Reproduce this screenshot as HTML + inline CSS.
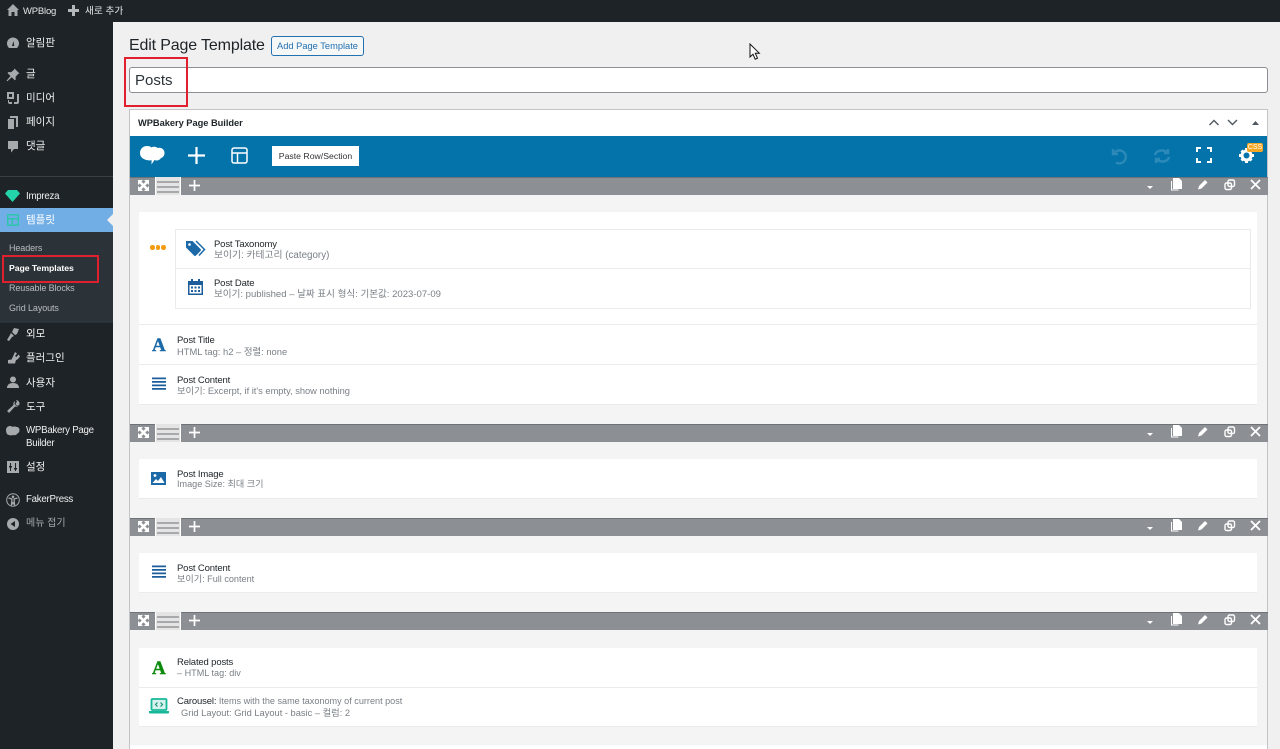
<!DOCTYPE html>
<html><head><meta charset="utf-8">
<style>
*{box-sizing:border-box}
html,body{margin:0;padding:0;width:1280px;height:749px;overflow:hidden;background:#f0f0f1}
body{position:relative;font-family:"Liberation Sans","Noto Sans CJK KR",sans-serif;font-size:10px;color:#3c434a}
.a{position:absolute}
.t{position:absolute;white-space:nowrap;line-height:14px}
.m{color:#f0f0f1;font-size:10.5px;left:26px}
.l{font-size:9.7px;letter-spacing:-.25px}
.s{color:#b9bcc0;font-size:9px;left:9px;letter-spacing:-.1px}
.ic{position:absolute;fill:#a7aaad}
.bar{position:absolute;left:130px;width:1138px;height:18px;background:#8c8f94;border-top:1px solid #6f7276}
.bar .mv{position:absolute;left:25px;top:-1px;width:26px;height:18px;background:#e4e4e4;border-left:1px solid #fff;border-right:1px solid #fff}
.bar .mv i{position:absolute;left:1px;width:22px;height:2px;background:#a8a9ab;box-shadow:0 5px 0 #a8a9ab,0 10px 0 #a8a9ab;top:4px}
.bar svg{position:absolute;fill:none;stroke:#fff}
.white{position:absolute;background:#fff;border-bottom:1px solid #ebebeb}
.h{position:absolute;color:#1d2327;font-size:9.5px;line-height:11px;white-space:nowrap;letter-spacing:-.15px}
.d{position:absolute;color:#7a7f85;font-size:9.3px;line-height:11px;white-space:nowrap}
.A{position:absolute;font-family:'Liberation Serif',serif;font-weight:bold;font-size:19px;line-height:17px;-webkit-text-stroke:.4px currentColor}
</style></head><body>

<svg width="0" height="0" style="position:absolute"><defs>
<symbol id="exp" viewBox="0 0 11 11"><path d="M1 1l9 9M10 1l-9 9" fill="none" stroke="#fff" stroke-width="2.600"/><path d="M0 0h5L0 5zM11 0H6l5 5zM0 11h5L0 6zM11 11H6l5-5z" fill="#fff" stroke="none"/></symbol>
<symbol id="pl" viewBox="0 0 11 11"><path d="M5.500 0v11M0 5.500h11" fill="none" stroke="#fff" stroke-width="1.700"/></symbol>
<symbol id="car" viewBox="0 0 8 5"><path d="M1 1h6L4 4z" fill="#fff" stroke="none"/></symbol>
<symbol id="act" viewBox="0 0 112 13"><path d="M3 0h6l3 3v8H3z" fill="#fff" stroke="none"/><path d="M1.500 3v9h7" fill="none" stroke="#fff" stroke-width="1"/><path d="M28 11.500l1-3.500 6-6 2.500 2.500-6 6z" fill="#fff" stroke="none"/><rect x="55" y="5" width="6.500" height="6.500" rx="1.500" fill="none" stroke="#fff" stroke-width="1.400"/><rect x="58" y="2" width="6.500" height="6.500" rx="1.500" fill="none" stroke="#fff" stroke-width="1.400"/><path d="M81 2l9 9M90 2l-9 9" fill="none" stroke="#fff" stroke-width="1.800"/></symbol>
</defs></svg>

<!-- admin bar -->
<div class="a" style="left:0;top:0;width:1280px;height:22px;background:#1d2327"></div>
<svg class="ic" style="left:6px;top:3px" width="14" height="14" viewBox="0 0 14 14"><path d="M7 1 L1 7 L2.500 7 L2.500 13 L5.500 13 L5.500 9 L8.500 9 L8.500 13 L11.500 13 L11.500 7 L13 7 Z"/></svg>
<div class="t" style="left:23px;top:5px;font-size:9.500px;letter-spacing:-.2px;color:#e6e7e8">WPBlog</div>
<svg class="a" style="left:68px;top:5px" width="11" height="11" viewBox="0 0 11 11"><path d="M4 0h3v4h4v3H7v4H4V7H0V4h4z" fill="#b5b8bb"/></svg>
<div class="t" style="left:85px;top:5px;font-size:9.700px;color:#e6e7e8">새로 추가</div>

<!-- sidebar -->
<div class="a" style="left:0;top:22px;width:113px;height:727px;background:#1d2327"></div>
<div class="a" style="left:0;top:176px;width:113px;height:1px;background:#3a3f44"></div>
<svg class="ic" style="left:6px;top:36px" width="14" height="14" viewBox="0 0 14 14"><path d="M7 1.500a6 6 0 0 0-6 6c0 1.800.8 3.300 2 4.500h8c1.200-1.200 2-2.700 2-4.500a6 6 0 0 0-6-6zM6 10l1.500-5 .8 5z"/></svg>
<div class="t m" style="top:36px">알림판</div>
<svg class="ic" style="left:6px;top:68px" width="14" height="14" viewBox="0 0 14 14"><path d="M8.500 0.500l5 5-1.500.5-2.500 3 .3 2.500-1 .8-3-3-4.500 4-.8-.5 4-4.800-3-3 1-1 2.500.3 3-2.500z"/></svg>
<div class="t m" style="top:67px">글</div>
<svg class="ic" style="left:6px;top:91px" width="14" height="14" viewBox="0 0 14 14"><path d="M1 1h7v7H1zM3 3v3h3V3zM10 3h3v8c0 1.500-1 2-2 2H8v-2h3V3zM2 9h1v2h3v2H4c-1 0-2-.5-2-2z" fill-rule="evenodd"/></svg>
<div class="t m" style="top:91px">미디어</div>
<svg class="ic" style="left:7px;top:116px" width="12" height="13" viewBox="0 0 12 13"><path d="M3 0h8v11H9V2H3zM1 3h6v10H1z"/></svg>
<div class="t m" style="top:115px">페이지</div>
<svg class="ic" style="left:7px;top:140px" width="12" height="13" viewBox="0 0 12 13"><path d="M1 1h10v8H7l-3 3.500V9H1z"/></svg>
<div class="t m" style="top:139px">댓글</div>
<svg class="a" style="left:5px;top:190px" width="15" height="12" viewBox="0 0 15 12"><path d="M3 0h9l3 3.500L7.500 12 0 3.500z" fill="#23d3a9"/></svg>
<div class="t m l" style="top:190px">Impreza</div>
<div class="a" style="left:0;top:208px;width:113px;height:24px;background:#72aee6"></div>
<svg class="a" style="left:7px;top:214px" width="12" height="12" viewBox="0 0 12 12"><path d="M0 0h12v12H0zM1.500 1.500v2.500h9V1.500zM1.500 5.500v5h3v-5zM6 5.500v5h4.500v-5z" fill="#2fc4ae" fill-rule="evenodd"/></svg>
<div class="t m" style="top:213px;color:#fff">템플릿</div>
<div class="a" style="left:107px;top:214px;width:0;height:0;border:6px solid transparent;border-right-color:#f0f0f1;border-left:0"></div>
<div class="a" style="left:0;top:232px;width:113px;height:91px;background:#2c3338"></div>
<div class="t s" style="top:241px">Headers</div>
<div class="t s" style="top:261px;color:#fff;font-weight:bold;font-size:8.700px;letter-spacing:-.05px">Page Templates</div>
<div class="t s" style="top:281px">Reusable Blocks</div>
<div class="t s" style="top:301px">Grid Layouts</div>
<svg class="ic" style="left:6px;top:327px" width="14" height="14" viewBox="0 0 14 14"><path d="M8 1l5 1-2 5-2 1-3-3zM5 6l3 3-2 1-3 4-2-1 3-5z"/></svg>
<div class="t m" style="top:327px">외모</div>
<svg class="ic" style="left:7px;top:351px" width="13" height="14" viewBox="0 0 13 14"><path d="M8 1l2 1.500-2 2.500 1.500 1 2-2.500 1.500 2-2.500 3-1.500.5-1 3.500H1V9l3.500-.5 1-2z"/></svg>
<div class="t m" style="top:351px">플러그인</div>
<svg class="ic" style="left:7px;top:376px" width="12" height="13" viewBox="0 0 12 13"><circle cx="6" cy="3.500" r="3"/><path d="M0 12c0-3 2-5 6-5s6 2 6 5z"/></svg>
<div class="t m" style="top:376px">사용자</div>
<svg class="ic" style="left:7px;top:400px" width="13" height="13" viewBox="0 0 13 13"><path d="M9 0c2 0 4 2 3.500 4.500L10 5.500 8.500 4 10 1.500 9 0zM8 1c-1.500 1-2 2.500-1.500 4L0.500 10.500c-.5 1 1 2.500 2 2l5.500-6c1.500.5 3 0 4-1.500L9.500 6 7.500 4z"/></svg>
<div class="t m" style="top:400px">도구</div>
<svg class="ic" style="left:5px;top:425px" width="15" height="13" viewBox="0 0 15 13"><path d="M1 5c0-2.500 2-4 4-4 1 0 2 .3 2.500 1 .8-.5 3-.8 4 0 1.500-.3 3 1 3 3 0 2-1 3-2 3.500-1 1.500-3 2-4.500 1.500-1 .5-3 .5-4 0C2 10 1 7.500 1 5z"/></svg>
<div class="t m l" style="top:424px">WPBakery Page</div>
<div class="t m l" style="top:437px">Builder</div>
<svg class="ic" style="left:7px;top:461px" width="12" height="12" viewBox="0 0 12 12"><path d="M0 0h12v12H0zM3 2v3H2v1.500h1V10h1V6.500h1V5H4V2zM8 2v5H7v1.500h1V10h1V8.500h1V7H9V2z" fill-rule="evenodd"/></svg>
<div class="t m" style="top:460px">설정</div>
<svg class="a" style="left:6px;top:493px" width="14" height="14" viewBox="0 0 14 14"><circle cx="7" cy="7" r="6.300" fill="none" stroke="#a7aaad"/><circle cx="7" cy="3.800" r="1.300" fill="#a7aaad"/><path d="M2.500 5L6 6l-.7 6.500 1.700-3 1.700 3L8 6l3.500-1" fill="none" stroke="#a7aaad" stroke-width="1.200"/></svg>
<div class="t m l" style="top:493px">FakerPress</div>
<svg class="a" style="left:7px;top:518px" width="12" height="12" viewBox="0 0 12 12"><circle cx="6" cy="6" r="6" fill="#a7aaad"/><path d="M8 3v6L3.500 6z" fill="#1d2327"/></svg>
<div class="t m" style="top:517px;color:#a7aaad;font-size:10px">메뉴 접기</div>

<!-- heading -->
<div class="t" style="left:129px;top:36px;font-size:16px;line-height:20px;letter-spacing:-.15px;color:#1d2327">Edit Page Template</div>
<div class="a" style="left:271px;top:36px;width:93px;height:20px;background:#f6f7f7;border:1px solid #2271b1;border-radius:3px;color:#2271b1;font-size:9.300px;line-height:19px;text-align:center;white-space:nowrap">Add Page Template</div>
<div class="a" style="left:129px;top:67px;width:1139px;height:26px;background:#fff;border:1px solid #8c8f94;border-radius:3px"></div>
<div class="t" style="left:135px;top:72px;font-size:15px;line-height:17px;color:#2c3338">Posts</div>

<!-- cursor -->
<svg class="a" style="left:749px;top:43px" width="12" height="19" viewBox="0 0 12 19"><path d="M1 1v13l3-2.800 2.200 5 2.300-1-2.200-5h4z" fill="#fff" stroke="#111" stroke-width="1"/></svg>

<!-- builder panel -->
<div class="a" style="left:129px;top:109px;width:1139px;height:640px;background:#fff;border:1px solid #c3c4c7"></div>
<div class="t" style="left:138px;top:116px;font-size:9.300px;font-weight:bold;color:#1d2327;letter-spacing:-.03px">WPBakery Page Builder</div>
<svg class="a" style="left:1208px;top:118px" width="54" height="9" viewBox="0 0 54 9" fill="none" stroke="#50575e" stroke-width="1.400"><path d="M1.500 7L6 2.500 10.500 7M20 2L24.500 6.500 29 2"/><path d="M44 7l3.500-4 3.500 4z" fill="#50575e" stroke="none"/></svg>
<div class="a" style="left:130px;top:136px;width:1137px;height:41px;background:#0473aa"></div>
<svg class="a" style="left:139px;top:145px" width="27" height="22" viewBox="0 0 27 22"><path d="M1 8c0-4 3-7 7-7 2 0 3.500.5 4.500 1.500C14 1.500 17 1.500 18.500 3c3-1 7 .8 7 5 0 2.500-1.500 4.500-3.500 5-1.500 2.500-4.500 3-6.500 2-1 1.500-2 3-3 4.500 0-1.500 0-3 .2-4.300C8 16 1 14 1 8z" fill="#fff"/></svg>
<svg class="a" style="left:188px;top:147px" width="17" height="17" viewBox="0 0 17 17"><path d="M7.400 0h2.200v7.400H17v2.200H9.600V17H7.400V9.600H0V7.400h7.400z" fill="#fff"/></svg>
<svg class="a" style="left:231px;top:147px" width="17" height="17" viewBox="0 0 17 17" fill="none" stroke="#fff" stroke-width="1.500"><rect x="1" y="1" width="15" height="15" rx="2"/><path d="M1 6h15M6.500 6v10"/></svg>
<div class="a" style="left:272px;top:146px;width:87px;height:20px;background:#fff;color:#333;font-size:8.700px;line-height:20px;text-align:center;white-space:nowrap">Paste Row/Section</div>
<svg class="a" style="left:1110px;top:147px" width="18" height="18" viewBox="0 0 18 18" fill="none" stroke="#2c8ab8" stroke-width="2.400"><path d="M3 2v5h5M3.500 7A6.500 6.500 0 1 1 6 15.500"/></svg>
<svg class="a" style="left:1153px;top:148px" width="18" height="16" viewBox="0 0 18 16" fill="none" stroke="#2c8ab8" stroke-width="2.400"><path d="M2 7c1-5 9-6 13-2M15 1v4h-4M16 9c-1 5-9 6-13 2M3 15v-4h4"/></svg>
<svg class="a" style="left:1196px;top:147px" width="16" height="16" viewBox="0 0 16 16" fill="none" stroke="#fff" stroke-width="2"><path d="M1 5V1h4M11 1h4v4M15 11v4h-4M5 15H1v-4"/></svg>
<svg class="a" style="left:1239px;top:148px" width="15" height="15" viewBox="0 0 15 15"><circle cx="7.500" cy="7.500" r="4.500" fill="none" stroke="#fff" stroke-width="3"/><path d="M6 0h3v3H6zM6 12h3v3H6zM0 6h3v3H0zM12 6h3v3h-3zM1.500 3.500l2-2 2 2-2 2zM9.500 3.500l2-2 2 2-2 2zM1.500 11.500l2-2 2 2-2 2zM9.500 11.500l2-2 2 2-2 2z" fill="#fff"/></svg>
<div class="a" style="left:1247px;top:143px;width:16px;height:9px;background:#f5a623;border-radius:2px;color:#fff;font-size:7px;line-height:9px;text-align:center">CSS</div>

<!-- row bodies -->
<div class="a" style="left:130px;top:177px;width:1137px;height:572px;background:#f4f4f4"></div>
<div class="a" style="left:130px;top:745px;width:1137px;height:4px;background:#fff"></div>

<!-- bars -->
<div class="bar" style="top:177px"><div class="mv"><i></i></div>
<svg style="left:8px;top:2px" width="11" height="11"><use href="#exp"/></svg>
<svg style="left:59px;top:2px" width="11" height="11"><use href="#pl"/></svg>
<svg style="left:1016px;top:7px" width="8" height="5"><use href="#car"/></svg>
<svg style="left:1040px;top:0" width="112" height="13"><use href="#act"/></svg>
</div>
<div class="bar" style="top:424px"><div class="mv"><i></i></div>
<svg style="left:8px;top:2px" width="11" height="11"><use href="#exp"/></svg>
<svg style="left:59px;top:2px" width="11" height="11"><use href="#pl"/></svg>
<svg style="left:1016px;top:7px" width="8" height="5"><use href="#car"/></svg>
<svg style="left:1040px;top:0" width="112" height="13"><use href="#act"/></svg>
</div>
<div class="bar" style="top:518px"><div class="mv"><i></i></div>
<svg style="left:8px;top:2px" width="11" height="11"><use href="#exp"/></svg>
<svg style="left:59px;top:2px" width="11" height="11"><use href="#pl"/></svg>
<svg style="left:1016px;top:7px" width="8" height="5"><use href="#car"/></svg>
<svg style="left:1040px;top:0" width="112" height="13"><use href="#act"/></svg>
</div>
<div class="bar" style="top:612px"><div class="mv"><i></i></div>
<svg style="left:8px;top:2px" width="11" height="11"><use href="#exp"/></svg>
<svg style="left:59px;top:2px" width="11" height="11"><use href="#pl"/></svg>
<svg style="left:1016px;top:7px" width="8" height="5"><use href="#car"/></svg>
<svg style="left:1040px;top:0" width="112" height="13"><use href="#act"/></svg>
</div>

<!-- row 1 -->
<div class="white" style="left:139px;top:212px;width:1118px;height:113px"></div>
<div class="a" style="left:150px;top:245px;width:16px;height:5px;display:flex;gap:1px"><i style="width:4.500px;height:4.500px;border-radius:50%;background:#f39c12"></i><i style="width:4.500px;height:4.500px;border-radius:50%;background:#f39c12"></i><i style="width:4.500px;height:4.500px;border-radius:50%;background:#f39c12"></i></div>
<div class="a" style="left:175px;top:229px;width:1076px;height:80px;background:#fff;border:1px solid #ebebeb"></div>
<div class="a" style="left:176px;top:268px;width:1074px;height:1px;background:#ebebeb"></div>
<svg class="a" style="left:185px;top:240px" width="21" height="17" viewBox="0 0 21 17"><path d="M1 1h6.500l8 8a1.500 1.500 0 0 1 0 2L11 15.500a1.500 1.500 0 0 1-2 0l-8-8z" fill="#1c69a8"/><circle cx="4.500" cy="4.500" r="1.300" fill="#fff"/><path d="M11 1l8.500 8.500-5.500 6" fill="none" stroke="#1c69a8" stroke-width="1.500"/></svg>
<div class="h" style="left:214px;top:239px">Post Taxonomy</div>
<div class="d" style="left:214px;top:250px;font-size:9.800px">보이기: 카테고리 (category)</div>
<svg class="a" style="left:188px;top:279px" width="15" height="16" viewBox="0 0 15 16"><path d="M3 0h2v2h5V0h2v2h3v14H0V2h3zM1.500 6v8.500h12V6z" fill="#1c5e9c" fill-rule="evenodd"/><path d="M3 7.500h2v2H3zM6.500 7.500h2v2h-2zM10 7.500h2v2h-2zM3 11h2v2H3zM6.500 11h2v2h-2zM10 11h2v2h-2z" fill="#1c5e9c"/></svg>
<div class="h" style="left:214px;top:278px">Post Date</div>
<div class="d" style="left:214px;top:289px;font-size:9.550px">보이기: published – 날짜 표시 형식: 기본값: 2023-07-09</div>

<div class="white" style="left:139px;top:325px;width:1118px;height:40px"></div>
<div class="A" style="left:152px;top:337px;color:#1c69a8">A</div>
<div class="h" style="left:177px;top:335px">Post Title</div>
<div class="d" style="left:177px;top:346px;font-size:9.400px">HTML tag: h2 – 정렬: none</div>

<div class="white" style="left:139px;top:365px;width:1118px;height:40px"></div>
<svg class="a" style="left:152px;top:377px" width="14" height="14" viewBox="0 0 14 14"><path d="M0 .5h14v1.800H0zM0 4h14v1.800H0zM0 7.500h14v1.800H0zM0 11h14v1.800H0z" fill="#1c5e9c"/></svg>
<div class="h" style="left:177px;top:375px">Post Content</div>
<div class="d" style="left:177px;top:386px">보이기: Excerpt, if it's empty, show nothing</div>

<!-- row 2 -->
<div class="white" style="left:139px;top:459px;width:1118px;height:40px"></div>
<svg class="a" style="left:151px;top:472px" width="15" height="13" viewBox="0 0 15 13"><path d="M0 0h15v13H0z" fill="#1c69a8"/><path d="M1.500 11l3.500-4 2 2 3-4 3.500 6z" fill="#fff"/><circle cx="4" cy="3.500" r="1.400" fill="#fff"/></svg>
<div class="h" style="left:177px;top:469px">Post Image</div>
<div class="d" style="left:177px;top:479px;font-size:9.100px">Image Size: 최대 크기</div>

<!-- row 3 -->
<div class="white" style="left:139px;top:553px;width:1118px;height:40px"></div>
<svg class="a" style="left:152px;top:565px" width="14" height="14" viewBox="0 0 14 14"><path d="M0 .5h14v1.800H0zM0 4h14v1.800H0zM0 7.500h14v1.800H0zM0 11h14v1.800H0z" fill="#1c5e9c"/></svg>
<div class="h" style="left:177px;top:563px">Post Content</div>
<div class="d" style="left:177px;top:574px;font-size:9.100px">보이기: Full content</div>

<!-- row 4 -->
<div class="white" style="left:139px;top:648px;width:1118px;height:40px"></div>
<div class="A" style="left:152px;top:660px;color:#0a8a0a">A</div>
<div class="h" style="left:177px;top:657px">Related posts</div>
<div class="d" style="left:177px;top:668px;font-size:9.100px">– HTML tag: div</div>
<div class="white" style="left:139px;top:688px;width:1118px;height:39px"></div>
<svg class="a" style="left:149px;top:698px" width="20" height="16" viewBox="0 0 20 16"><rect x="2.500" y="1" width="15" height="11" rx="1" fill="#d5f3ec" stroke="#17b89a" stroke-width="1.800"/><path d="M0 13h20v1.500a1 1 0 0 1-1 1H1a1 1 0 0 1-1-1z" fill="#17b89a"/><path d="M8.500 4.500L6.500 6.500l2 2M11.500 4.500l2 2-2 2" fill="none" stroke="#128a74" stroke-width="1.100"/></svg>
<div class="t" style="left:177px;top:696px;font-size:9.100px;line-height:11px;color:#7a7f85"><span style="color:#1d2327;font-size:9.500px;letter-spacing:-.15px">Carousel:</span> Items with the same taxonomy of current post</div>
<div class="d" style="left:181px;top:708px;font-size:9.300px">Grid Layout: Grid Layout - basic – 컬럼: 2</div>

<!-- red annotations -->
<div class="a" style="left:124px;top:57px;width:64px;height:50px;border:2px solid #e0202e"></div>
<div class="a" style="left:2px;top:255px;width:97px;height:28px;border:2px solid #e0202e"></div>
</body></html>
